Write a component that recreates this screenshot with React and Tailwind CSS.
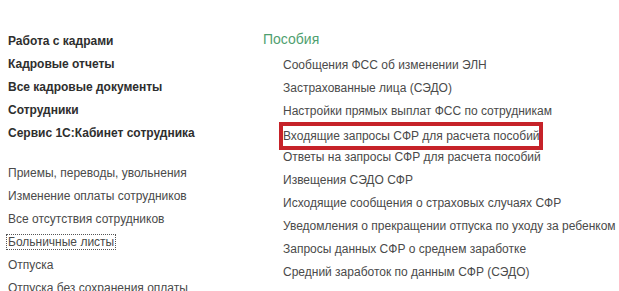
import React from "react";

const MAIN_LINKS = [
  "Работа с кадрами",
  "Кадровые отчеты",
  "Все кадровые документы",
  "Сотрудники",
  "Сервис 1С:Кабинет сотрудника",
];

const DOC_LINKS = [
  "Приемы, переводы, увольнения",
  "Изменение оплаты сотрудников",
  "Все отсутствия сотрудников",
  "Больничные листы",
  "Отпуска",
  "Отпуска без сохранения оплаты",
];

const BENEFITS = [
  "Сообщения ФСС об изменении ЭЛН",
  "Застрахованные лица (СЭДО)",
  "Настройки прямых выплат ФСС по сотрудникам",
  "Входящие запросы СФР для расчета пособий",
  "Ответы на запросы СФР для расчета пособий",
  "Извещения СЭДО СФР",
  "Исходящие сообщения о страховых случаях СФР",
  "Уведомления о прекращении отпуска по уходу за ребенком",
  "Запросы данных СФР о среднем заработке",
  "Средний заработок по данным СФР (СЭДО)",
];

export default function App() {
  return (
    <div className="h-[291px] w-[619px] overflow-hidden bg-white font-['Liberation_Sans',Arial,sans-serif] text-[12px]">
      <div className="flex pt-[31px]">
        {/* левая колонка */}
        <section className="w-[263px] shrink-0 pl-[8px] pt-[2px]">
          <ul className="space-y-[6px]">
            {MAIN_LINKS.map((t) => (
              <li key={t} className="h-[17px] leading-[17px] font-bold text-[#2e2e2e]">
                {t}
              </li>
            ))}
          </ul>
          <ul className="mt-[23px] space-y-[6px]">
            {DOC_LINKS.map((t) => (
              <li key={t} className="h-[17px] leading-[17px] text-[#4a4a4a]">
                {t === "Больничные листы" ? (
                  <span className="-ml-[2px] border border-dotted border-[#555] px-[1px]">{t}</span>
                ) : (
                  t
                )}
              </li>
            ))}
          </ul>
        </section>

        {/* правая колонка */}
        <section className="flex-1">
          <h2 className="h-[17px] text-[14px] leading-[17px] text-[#4f9f6f]">Пособия</h2>
          <ul className="mt-[9px] space-y-[6px] pl-[20px]">
            {BENEFITS.map((t, idx) =>
              idx === 3 ? (
                <li key={t} className="flex h-[17px] items-start text-[#4a4a4a]">
                  <span className="-ml-[4px] -mt-[4px] h-[28px] w-[264px] shrink-0 whitespace-nowrap border-[4px] border-[#c62229] leading-[20px]">
                    {t}
                  </span>
                </li>
              ) : (
                <li key={t} className="h-[17px] leading-[17px] text-[#4a4a4a]">
                  {t}
                </li>
              )
            )}
          </ul>
        </section>
      </div>
    </div>
  );
}
